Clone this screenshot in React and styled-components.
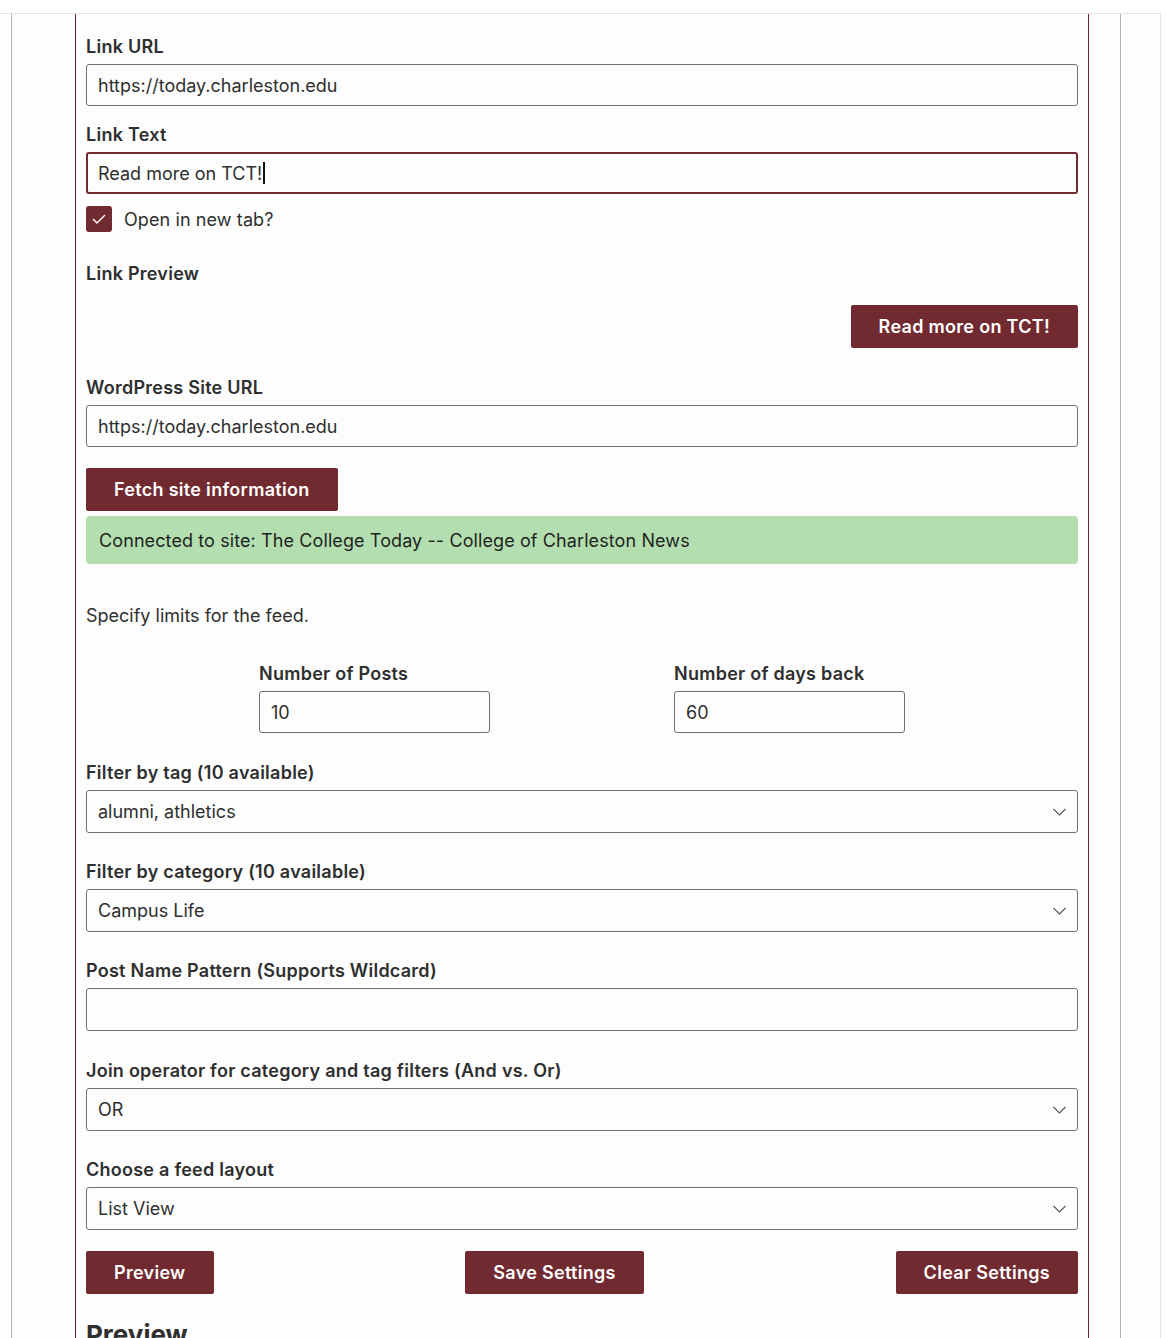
import React from "react";
import styled, { createGlobalStyle } from "styled-components";

const maroon = "#722a31";
const ink = "#2f2f2f";

const GlobalStyle = createGlobalStyle`
  body {
    margin: 0;
    background: #ffffff;
    font-family: Inter, "Noto Sans", "Liberation Sans", sans-serif;
    color: ${ink};
  }
`;

const Frame = styled.div`
  margin-top: 13px;
  width: 1161px;
  border-top: 1px solid #e3e3e3;
  border-right: 1px solid #e3e3e3;
  padding-left: 11px;
  box-sizing: border-box;
  background: #fdfdfd;
`;

const Column = styled.div`
  width: 1110px;
  box-sizing: border-box;
  border-left: 1px solid #b0b0b0;
  border-right: 1px solid #b0b0b0;
  padding: 0 31px 0 63px;
`;

const Block = styled.div`
  width: 1014px;
  box-sizing: border-box;
  border-left: 1px solid ${maroon};
  border-right: 1px solid ${maroon};
  padding: 21px 10px 0 10px;
  display: flex;
  flex-direction: column;
`;

const Group = styled.div`
  display: flex;
  flex-direction: column;
  margin-bottom: ${({ $gap }) => $gap ?? 0}px;
`;

const Label = styled.div`
  font-size: 18px;
  font-weight: 600;
  line-height: 22px;
  letter-spacing: 0.25px;
  padding-top: 1px;
  margin-bottom: 6px;
`;

const Input = styled.div`
  height: ${({ $h }) => $h ?? 42}px;
  box-sizing: border-box;
  border: ${({ $focus }) => ($focus ? `2px solid ${maroon}` : "1px solid #707070")};
  border-radius: 3px;
  padding: 0 ${({ $focus }) => ($focus ? 10 : 11)}px;
  display: flex;
  align-items: center;
  justify-content: ${({ $focus }) => ($focus ? "flex-start" : "space-between")};
  font-size: 18px;
  color: ${ink};
  background: #fdfdfd;
  width: ${({ $w }) => ($w ? `${$w}px` : "auto")};
`;

const Caret = styled.span`
  display: inline-block;
  width: 1.5px;
  height: 22px;
  background: #111;
  margin-left: 1px;
`;

const CheckRow = styled.div`
  display: flex;
  align-items: center;
  gap: 12px;
  font-size: 18px;
  letter-spacing: 0.1px;
  margin: 12px 0 30px;
`;

const Box = styled.div`
  width: 26px;
  height: 26px;
  border-radius: 3px;
  background: ${maroon};
  display: flex;
  align-items: center;
  justify-content: center;
`;

const Button = styled.div`
  height: 43px;
  box-sizing: border-box;
  padding: 0 28px;
  background: ${maroon};
  color: #fff;
  border-radius: 2px;
  font-size: 18px;
  font-weight: 600;
  letter-spacing: 0.3px;
  display: flex;
  align-items: center;
  justify-content: center;
  align-self: ${({ $align }) => $align ?? "auto"};
  margin: ${({ $m }) => $m ?? "0"};
`;

const Notice = styled.div`
  height: 48px;
  margin-top: 5px;
  border-radius: 4px;
  background: #b3dfb0;
  display: flex;
  align-items: center;
  padding: 0 13px;
  font-size: 18px;
  letter-spacing: 0.1px;
  color: #1f1f1f;
`;

const Hint = styled.p`
  margin: 41px 0 35px;
  font-size: 18px;
  line-height: 22px;
`;

const Limits = styled.div`
  display: flex;
  gap: 184px;
  padding-left: 173px;
  margin-bottom: 28px;
`;

const Actions = styled.div`
  display: flex;
  justify-content: space-between;
  margin-top: 21px;
`;

const Heading = styled.h2`
  margin: 25px 0 0;
  font-size: 26px;
  font-weight: 700;
  line-height: 32px;
`;

const Chevron = () => (
  <svg width="13" height="8" viewBox="0 0 13 8" fill="none">
    <path d="M0.5 1l6 6 6-6" stroke="#555" strokeWidth="1.1" />
  </svg>
);

const Select = ({ value }) => (
  <Input $h={43}>
    <span>{value}</span>
    <Chevron />
  </Input>
);

export default function App() {
  return (
    <>
      <GlobalStyle />
      <Frame>
        <Column>
          <Block>
            <Group $gap={17}>
              <Label>Link URL</Label>
              <Input>https://today.charleston.edu</Input>
            </Group>
            <Group>
              <Label>Link Text</Label>
              <Input $focus>
                Read more on TCT!<Caret />
              </Input>
            </Group>
            <CheckRow>
              <Box>
                <svg width="14" height="10" viewBox="0 0 14 10" fill="none">
                  <path d="M1 5l4 4 8-8" stroke="#fff" strokeWidth="1.4" />
                </svg>
              </Box>
              Open in new tab?
            </CheckRow>
            <Label>Link Preview</Label>
            <Button $align="flex-end" $m="14px 0 28px">
              Read more on TCT!
            </Button>
            <Group $gap={21}>
              <Label>WordPress Site URL</Label>
              <Input>https://today.charleston.edu</Input>
            </Group>
            <Button $align="flex-start">Fetch site information</Button>
            <Notice>Connected to site: The College Today -- College of Charleston News</Notice>
            <Hint>Specify limits for the feed.</Hint>
            <Limits>
              <Group>
                <Label>Number of Posts</Label>
                <Input $w={231}>10</Input>
              </Group>
              <Group>
                <Label>Number of days back</Label>
                <Input $w={231}>60</Input>
              </Group>
            </Limits>
            <Group $gap={27}>
              <Label>Filter by tag (10 available)</Label>
              <Select value="alumni, athletics" />
            </Group>
            <Group $gap={27}>
              <Label>Filter by category (10 available)</Label>
              <Select value="Campus Life" />
            </Group>
            <Group $gap={28}>
              <Label>Post Name Pattern (Supports Wildcard)</Label>
              <Input $h={43} />
            </Group>
            <Group $gap={27}>
              <Label>Join operator for category and tag filters (And vs. Or)</Label>
              <Select value="OR" />
            </Group>
            <Group>
              <Label>Choose a feed layout</Label>
              <Select value="List View" />
            </Group>
            <Actions>
              <Button>Preview</Button>
              <Button>Save Settings</Button>
              <Button>Clear Settings</Button>
            </Actions>
            <Heading>Preview</Heading>
          </Block>
        </Column>
      </Frame>
    </>
  );
}
